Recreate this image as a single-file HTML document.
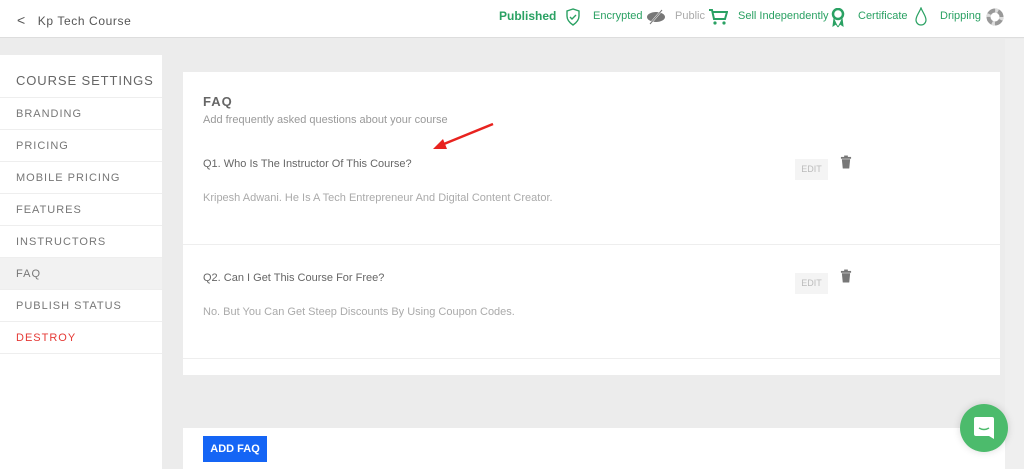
<!DOCTYPE html>
<html><head><meta charset="utf-8"><style>
*{margin:0;padding:0;box-sizing:border-box}
body{width:1024px;height:469px;overflow:hidden;background:#ececec;font-family:"Liberation Sans",sans-serif;position:relative;color:#666}
.hdr{position:absolute;left:0;top:0;width:1024px;height:38px;background:#fff;border-bottom:1px solid #ddd}
.back{position:absolute;left:17px;top:12px;font-size:12px;color:#555;letter-spacing:.6px}
.back b{font-weight:normal;margin-right:12px;font-size:14px}
.st{position:absolute;top:10px;font-size:11px;color:#2aa163;white-space:nowrap}
.side{position:absolute;left:0;top:55px;width:162px;height:414px;background:#fff}
.side .t{height:43px;padding:18px 0 0 16px;font-size:13px;letter-spacing:.9px;color:#666;border-bottom:1px solid #eee;white-space:nowrap}
.side .i{height:32px;padding:10px 0 0 16px;font-size:11px;letter-spacing:1px;color:#777;border-bottom:1px solid #eee}
.card{position:absolute;left:183px;top:72px;width:817px;height:303px;background:#fff}
.h{position:absolute;left:20px;top:22px;font-size:13px;font-weight:bold;color:#666;letter-spacing:1px}
.sub{position:absolute;left:20px;top:42px;font-size:11px;color:#999}
.q{position:absolute;left:20px;font-size:11px;color:#666}
.a{position:absolute;left:20px;font-size:11px;color:#aaa}
.edit{position:absolute;left:612px;width:33px;height:21px;background:#f4f4f4;color:#bbb;font-size:9px;text-align:center;line-height:21px}
.trash{position:absolute;left:657px}
.line{position:absolute;left:0;width:817px;height:1px;background:#eee}
.bot{position:absolute;left:183px;top:428px;width:822px;height:41px;background:#fff}
.btn{position:absolute;left:20px;top:8px;width:64px;height:26px;background:#1565f5;color:#fff;font-size:11px;font-weight:bold;text-align:center;line-height:26px}
.scroll{position:absolute;left:1005px;top:39px;width:19px;height:430px;background:#efefef}
.chat{position:absolute;left:960px;top:404px;width:48px;height:48px;border-radius:50%;background:#4cbb6c;box-shadow:0 0 8px rgba(0,0,0,.15)}
</style></head><body>
<div class="hdr">
<div class="back"><b>&lt;</b>Kp Tech Course</div>
<div class="st" style="left:499px;font-size:12px;font-weight:bold;top:9px">Published</div>
<svg style="position:absolute;left:565px;top:8px" width="16" height="18" viewBox="0 0 16 18"><path d="M8 1L2 3v5c0 4 3 7 6 9 3-2 6-5 6-9V3z" fill="none" stroke="#2aa163" stroke-width="1.4"/><path d="M5 9l2 2 4-4" fill="none" stroke="#2aa163" stroke-width="1.4"/></svg>
<div class="st" style="left:593px">Encrypted</div>
<svg style="position:absolute;left:646px;top:9px" width="20" height="16" viewBox="0 0 20 16"><ellipse cx="10" cy="8" rx="9" ry="5" fill="#777"/><line x1="4" y1="15" x2="16" y2="1" stroke="#fff" stroke-width="2"/><line x1="4" y1="15" x2="16" y2="1" stroke="#777" stroke-width="1"/></svg>
<div class="st" style="left:675px;color:#aaa">Public</div>
<svg style="position:absolute;left:708px;top:8px" width="20" height="18" viewBox="0 0 20 18"><path d="M1 2h3l2 9h11l2-7H5" fill="none" stroke="#2aa163" stroke-width="2"/><circle cx="7" cy="15" r="1.6" fill="#2aa163"/><circle cx="16" cy="15" r="1.6" fill="#2aa163"/></svg>
<div class="st" style="left:738px">Sell Independently</div>
<svg style="position:absolute;left:831px;top:8px" width="14" height="20" viewBox="0 0 14 20"><circle cx="7" cy="6" r="5" fill="none" stroke="#2aa163" stroke-width="2.5"/><path d="M3 10l-1 8 3-2 2 3M11 10l1 8-3-2-2 3" fill="#2aa163" stroke="#2aa163"/></svg>
<div class="st" style="left:858px">Certificate</div>
<svg style="position:absolute;left:914px;top:7px" width="14" height="20" viewBox="0 0 14 20"><path d="M7 1C5 6 2 9 2 13a5 5 0 0010 0c0-4-3-7-5-12z" fill="none" stroke="#2aa163" stroke-width="1.2"/></svg>
<div class="st" style="left:940px">Dripping</div>
<svg style="position:absolute;left:986px;top:8px" width="18" height="18" viewBox="0 0 18 18"><circle cx="9" cy="9" r="6.5" fill="none" stroke="#999" stroke-width="4"/><circle cx="9" cy="9" r="6.5" fill="none" stroke="#ddd" stroke-width="4" stroke-dasharray="3 7.2"/></svg>
</div>
<div class="side">
<div class="t">COURSE SETTINGS</div>
<div class="i">BRANDING</div><div class="i">PRICING</div><div class="i">MOBILE PRICING</div><div class="i">FEATURES</div><div class="i">INSTRUCTORS</div>
<div class="i" style="background:#f2f2f2">FAQ</div><div class="i">PUBLISH STATUS</div><div class="i" style="color:#e53935">DESTROY</div>
</div>
<div class="card">
<div class="h">FAQ</div>
<div class="sub">Add frequently asked questions about your course</div>
<div class="q" style="top:86px">Q1. Who Is The Instructor Of This Course?</div>
<div class="a" style="top:120px">Kripesh Adwani. He Is A Tech Entrepreneur And Digital Content Creator.</div>
<div class="edit" style="top:87px">EDIT</div>
<svg class="trash" style="top:83px" width="12" height="14" viewBox="0 0 13 14"><rect x="1" y="1.5" width="11" height="2" fill="#777"/><rect x="4.5" y="0" width="4" height="2" fill="#777"/><path d="M2 4h9l-1 10H3z" fill="#777"/></svg>
<div class="line" style="top:172px"></div>
<div class="q" style="top:200px">Q2. Can I Get This Course For Free?</div>
<div class="a" style="top:234px">No. But You Can Get Steep Discounts By Using Coupon Codes.</div>
<div class="edit" style="top:201px">EDIT</div>
<svg class="trash" style="top:197px" width="12" height="14" viewBox="0 0 13 14"><rect x="1" y="1.5" width="11" height="2" fill="#777"/><rect x="4.5" y="0" width="4" height="2" fill="#777"/><path d="M2 4h9l-1 10H3z" fill="#777"/></svg>
<div class="line" style="top:286px"></div>
</div>
<svg style="position:absolute;left:425px;top:120px" width="72" height="32" viewBox="0 0 72 32"><line x1="68" y1="4" x2="14" y2="26" stroke="#e8231f" stroke-width="2.5"/><path d="M8 29l10-10 4 10z" fill="#e8231f"/></svg>
<div class="bot"><div class="btn">ADD FAQ</div></div>
<div class="scroll"></div>
<div class="chat"><svg style="position:absolute;left:14px;top:13px" width="20" height="22" viewBox="0 0 20 22"><path d="M2 0h16a2 2 0 012 2v20l-5-3H2a2 2 0 01-2-2V2a2 2 0 012-2z" fill="#fff"/><path d="M5 11q5 3 10 0" fill="none" stroke="#4cbb6c" stroke-width="1.5"/></svg></div>
</body></html>
